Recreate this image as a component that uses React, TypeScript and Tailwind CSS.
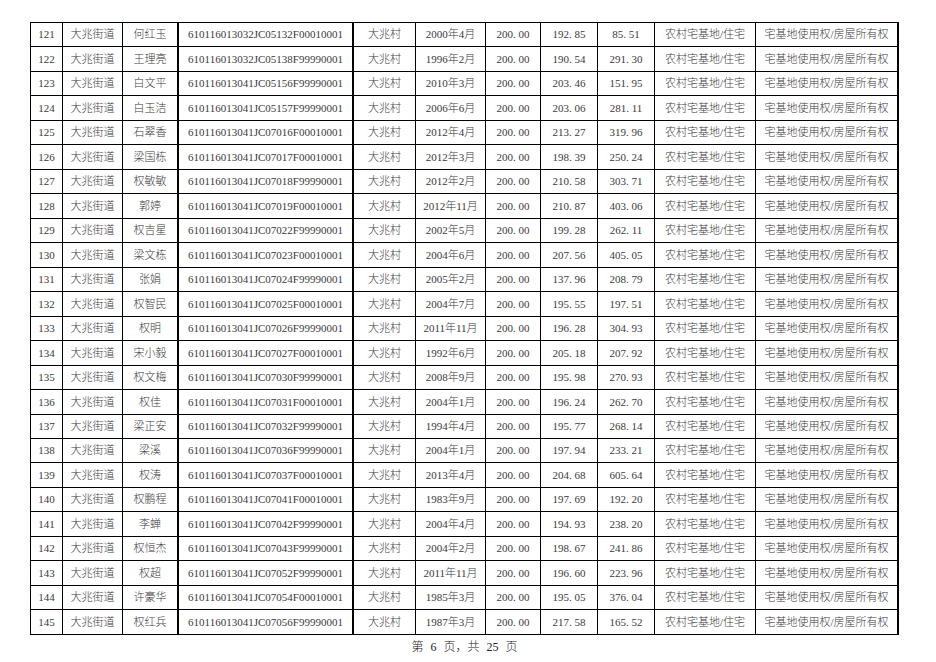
import React from "react";

const rows: [number, string, string, string, string, string][] = [
  [121, "何红玉", "610116013032JC05132F00010001", "2000年4月", "192.85", "85.51"],
  [122, "王理亮", "610116013032JC05138F99990001", "1996年2月", "190.54", "291.30"],
  [123, "白文平", "610116013041JC05156F99990001", "2010年3月", "203.46", "151.95"],
  [124, "白玉洁", "610116013041JC05157F99990001", "2006年6月", "203.06", "281.11"],
  [125, "石翠香", "610116013041JC07016F00010001", "2012年4月", "213.27", "319.96"],
  [126, "梁国栋", "610116013041JC07017F00010001", "2012年3月", "198.39", "250.24"],
  [127, "权敏敏", "610116013041JC07018F99990001", "2012年2月", "210.58", "303.71"],
  [128, "郭婷", "610116013041JC07019F00010001", "2012年11月", "210.87", "403.06"],
  [129, "权吉星", "610116013041JC07022F99990001", "2002年5月", "199.28", "262.11"],
  [130, "梁文栋", "610116013041JC07023F00010001", "2004年6月", "207.56", "405.05"],
  [131, "张娟", "610116013041JC07024F99990001", "2005年2月", "137.96", "208.79"],
  [132, "权智民", "610116013041JC07025F00010001", "2004年7月", "195.55", "197.51"],
  [133, "权明", "610116013041JC07026F99990001", "2011年11月", "196.28", "304.93"],
  [134, "宋小毅", "610116013041JC07027F00010001", "1992年6月", "205.18", "207.92"],
  [135, "权文梅", "610116013041JC07030F99990001", "2008年9月", "195.98", "270.93"],
  [136, "权佳", "610116013041JC07031F00010001", "2004年1月", "196.24", "262.70"],
  [137, "梁正安", "610116013041JC07032F99990001", "1994年4月", "195.77", "268.14"],
  [138, "梁溪", "610116013041JC07036F99990001", "2004年1月", "197.94", "233.21"],
  [139, "权涛", "610116013041JC07037F00010001", "2013年4月", "204.68", "605.64"],
  [140, "权鹏程", "610116013041JC07041F00010001", "1983年9月", "197.69", "192.20"],
  [141, "李蝉", "610116013041JC07042F99990001", "2004年4月", "194.93", "238.20"],
  [142, "权恒杰", "610116013041JC07043F99990001", "2004年2月", "198.67", "241.86"],
  [143, "权超", "610116013041JC07052F99990001", "2011年11月", "196.60", "223.96"],
  [144, "许豪华", "610116013041JC07054F00010001", "1985年3月", "195.05", "376.04"],
  [145, "权红兵", "610116013041JC07056F99990001", "1987年3月", "217.58", "165.52"],
];

const cell = "flex items-center justify-center border-r border-b border-black whitespace-nowrap";

// SimSun-style half-width period
const Num = ({ v }: { v: string }) => {
  const [a, b] = v.split(".");
  return (
    <span>
      {a}
      <span className="inline-block w-[5.5px] text-left">.</span>
      {b}
    </span>
  );
};

const App = () => {
  return (
    <div
      className="w-[936px] h-[662px] bg-white pt-[22px] pl-[30px] text-[11px] text-[#3a3a3a] font-light"
      style={{ fontFamily: '"Liberation Serif", "Noto Sans CJK SC", serif' }}
    >
      <div className="w-[869px] grid grid-cols-[32px_60px_56px_175px_62px_70px_55px_57px_57px_101px_143px] auto-rows-[24.48px] border-l border-t border-black">
        {rows.map((r) => (
          <React.Fragment key={r[0]}>
            <div className={cell}>{r[0]}</div>
            <div className={cell}>大兆街道</div>
            <div className={`${cell} border-r-2`}>{r[1]}</div>
            <div className={`${cell} border-r-2`}>{r[2]}</div>
            <div className={cell}>大兆村</div>
            <div className={cell}>{r[3]}</div>
            <div className={cell}>
              <Num v="200.00" />
            </div>
            <div className={cell}>
              <Num v={r[4]} />
            </div>
            <div className={cell}>
              <Num v={r[5]} />
            </div>
            <div className={cell}>农村宅基地/住宅</div>
            <div className={`${cell} border-r-2`}>宅基地使用权/房屋所有权</div>
          </React.Fragment>
        ))}
      </div>
      <div className="w-[869px] flex justify-center pt-[3px] text-[12px] text-[#222] [word-spacing:4px]">
        第 6 页，共 25 页
      </div>
    </div>
  );
};

export default App;
